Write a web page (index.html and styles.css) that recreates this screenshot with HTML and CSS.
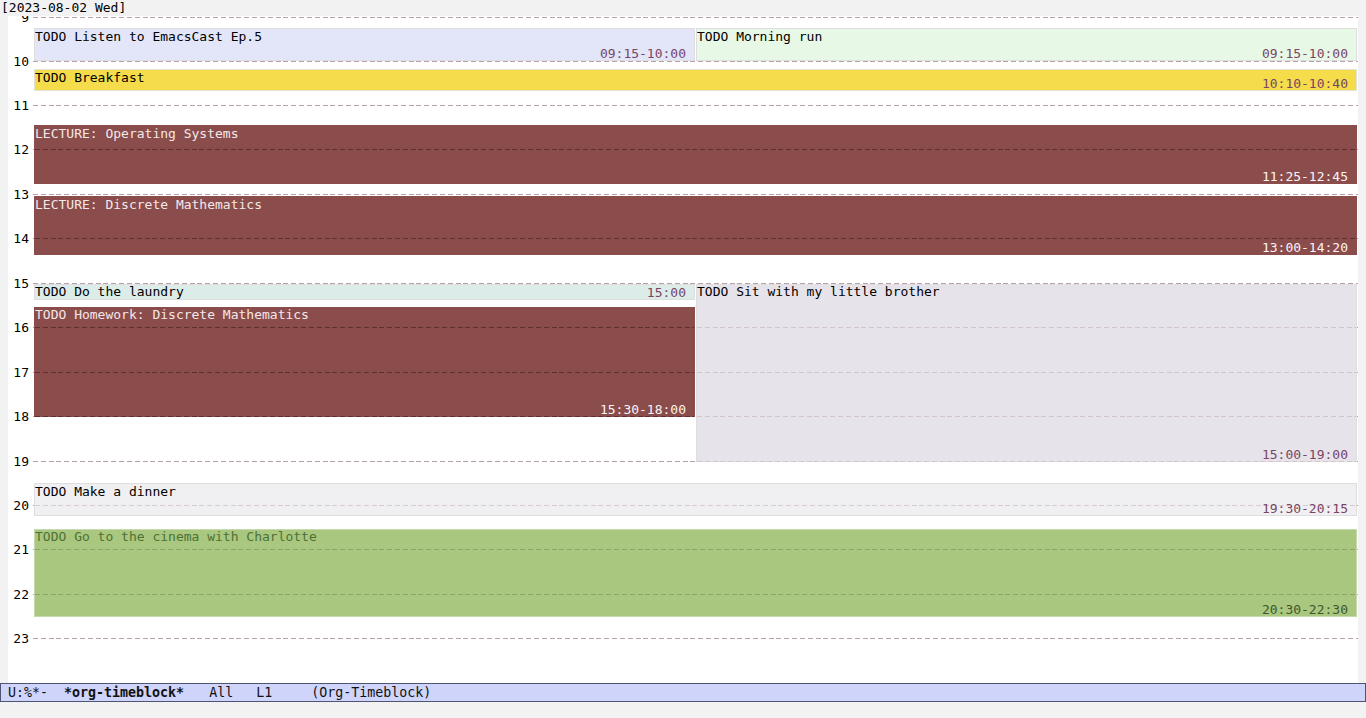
FILE: index.html
```html
<!DOCTYPE html>
<html>
<head>
<meta charset="utf-8">
<title>org-timeblock</title>
<link rel="stylesheet" href="styles.css">
</head>
<body>
<div class="header">[2023-08-02 Wed]</div>
<div class="window">
  <div class="hour" style="top:1px"><span class="lbl">9</span><span class="dash"></span></div>
  <div class="hour" style="top:45px"><span class="lbl">10</span><span class="dash"></span></div>
  <div class="hour" style="top:89px"><span class="lbl">11</span><span class="dash"></span></div>
  <div class="hour" style="top:133px"><span class="lbl">12</span><span class="dash"></span></div>
  <div class="hour" style="top:178px"><span class="lbl">13</span><span class="dash"></span></div>
  <div class="hour" style="top:222px"><span class="lbl">14</span><span class="dash"></span></div>
  <div class="hour" style="top:267px"><span class="lbl">15</span><span class="dash"></span></div>
  <div class="hour" style="top:311px"><span class="lbl">16</span><span class="dash"></span></div>
  <div class="hour" style="top:356px"><span class="lbl">17</span><span class="dash"></span></div>
  <div class="hour" style="top:400px"><span class="lbl">18</span><span class="dash"></span></div>
  <div class="hour" style="top:445px"><span class="lbl">19</span><span class="dash"></span></div>
  <div class="hour" style="top:489px"><span class="lbl">20</span><span class="dash"></span></div>
  <div class="hour" style="top:533px"><span class="lbl">21</span><span class="dash"></span></div>
  <div class="hour" style="top:578px"><span class="lbl">22</span><span class="dash"></span></div>
  <div class="hour" style="top:622px"><span class="lbl">23</span><span class="dash"></span></div>

  <div class="blk col-l listen" style="top:12px;height:33px">
    <div class="title">TODO Listen to EmacsCast Ep.5</div>
    <div class="time">09:15-10:00</div>
  </div>
  <div class="blk col-r run" style="top:12px;height:33px">
    <div class="title">TODO Morning run</div>
    <div class="time">09:15-10:00</div>
  </div>
  <div class="blk col-full breakfast" style="top:53px;height:22px">
    <div class="title">TODO Breakfast</div>
    <div class="time">10:10-10:40</div>
  </div>
  <div class="blk col-full lecture" style="top:109px;height:59px">
    <i class="ln" style="top:23px"></i>
    <div class="title">LECTURE: Operating Systems</div>
    <div class="time">11:25-12:45</div>
  </div>
  <div class="blk col-full lecture" style="top:180px;height:59px">
    <i class="ln" style="top:41px"></i>
    <div class="title">LECTURE: Discrete Mathematics</div>
    <div class="time">13:00-14:20</div>
  </div>
  <div class="blk col-l laundry" style="top:268px;height:16px">
    <div class="title up">TODO Do the laundry</div>
    <div class="time">15:00</div>
  </div>
  <div class="blk col-l lecture" style="top:291px;height:110px">
    <i class="ln" style="top:19px"></i>
    <i class="ln" style="top:64px"></i>
    <i class="ln" style="top:108px"></i>
    <div class="title up">TODO Homework: Discrete Mathematics</div>
    <div class="time">15:30-18:00</div>
  </div>
  <div class="blk col-r sit" style="top:268px;height:178px">
    <i class="ln" style="top:42px"></i>
    <i class="ln" style="top:87px"></i>
    <i class="ln" style="top:131px"></i>
    <i class="ln" style="top:176px"></i>
    <div class="title up">TODO Sit with my little brother</div>
    <div class="time">15:00-19:00</div>
  </div>
  <div class="blk col-full dinner" style="top:467px;height:33px">
    <i class="ln" style="top:21px"></i>
    <div class="title">TODO Make a dinner</div>
    <div class="time">19:30-20:15</div>
  </div>
  <div class="blk col-full cinema" style="top:513px;height:88px">
    <i class="ln" style="top:19px"></i>
    <i class="ln" style="top:64px"></i>
    <div class="title up">TODO Go to the cinema with Charlotte</div>
    <div class="time">20:30-22:30</div>
  </div>
</div>
<div class="modeline">
  <span class="m1">U:%*-</span><span class="m2">*org-timeblock*</span><span class="m3">All</span><span class="m4">L1</span><span class="m5">(Org-Timeblock)</span>
</div>
<div class="echo"></div>
</body>
</html>
```

FILE: styles.css
```css
html, body {
  margin: 0;
  padding: 0;
}
body {
  background: #f2f2f2;
  font-family: "DejaVu Sans Mono", "Liberation Mono", monospace;
  font-size: 13px;
  color: #000;
  width: 1366px;
  height: 718px;
  overflow: hidden;
}
.header {
  position: relative;
  z-index: 2;
  height: 16px;
  line-height: 16px;
  padding-left: 1px;
  background: #f2f2f2;
  white-space: pre;
}
.window {
  position: relative;
  height: 667px;
  margin: 0 8px;
  background: #fff;
  overflow: hidden;
}
.hour {
  position: absolute;
  left: 0;
  right: 0;
  height: 1px;
}
.hour .lbl {
  position: absolute;
  left: 0;
  top: -7px;
  width: 21px;
  text-align: right;
  line-height: 15px;
}
.hour .dash {
  position: absolute;
  left: 25px;
  right: 0;
  top: 0;
  height: 1px;
  background: repeating-linear-gradient(90deg, #b9a1ac 0 5px, transparent 5px 7.826px);
}
.blk {
  position: absolute;
  box-sizing: border-box;
  border: 1px solid #dedede;
}
.col-l { left: 26px; width: 661px; }
.col-r { left: 688px; width: 661px; }
.col-full { left: 26px; width: 1323px; }
.title {
  position: relative;
  line-height: 15px;
  white-space: pre;
}
.title.up { top: -1px; }
.time {
  position: absolute;
  right: 8px;
  bottom: -1px;
  line-height: 15px;
  white-space: pre;
  color: #7a4565;
}
.ln {
  position: absolute;
  left: 0;
  right: 0;
  height: 1px;
  background: repeating-linear-gradient(90deg, var(--ln) 0 5px, transparent 5px 7.826px);
}
.listen { background: #e2e6f8; }
.run { background: #e8f8e6; }
.breakfast { background: #f5dc4b; border-color: #e4e2d4; }
.lecture {
  background: #8b4c4c;
  border-color: #8b4c4c;
  --ln: #5e2f2f;
}
.lecture .title { color: #f4e8e8; }
.lecture .time { color: #fbf4f4; }
.laundry { background: #dcece9; }
.sit { background: #e6e3ea; --ln: #d3c4cc; }
.dinner { background: #f0f0f2; --ln: #d8cad1; }
.cinema {
  background: #aac77f;
  border-color: #c6d9ad;
  --ln: #8ea46b;
}
.cinema .title { color: #4d7235; }
.cinema .time { color: #3e5730; }
.modeline {
  box-sizing: border-box;
  height: 19px;
  border: 1px solid #4f5474;
  background: #cfd4fb;
  font-size: 13.3px;
  line-height: 17px;
  padding-left: 7px;
  display: flex;
  white-space: pre;
  color: #111;
}
.m2 { margin-left: 16px; font-weight: bold; }
.m3 { margin-left: 25px; }
.m4 { margin-left: 23px; }
.m5 { margin-left: 39px; }
.echo {
  height: 16px;
  background: #f2f2f2;
}
```
